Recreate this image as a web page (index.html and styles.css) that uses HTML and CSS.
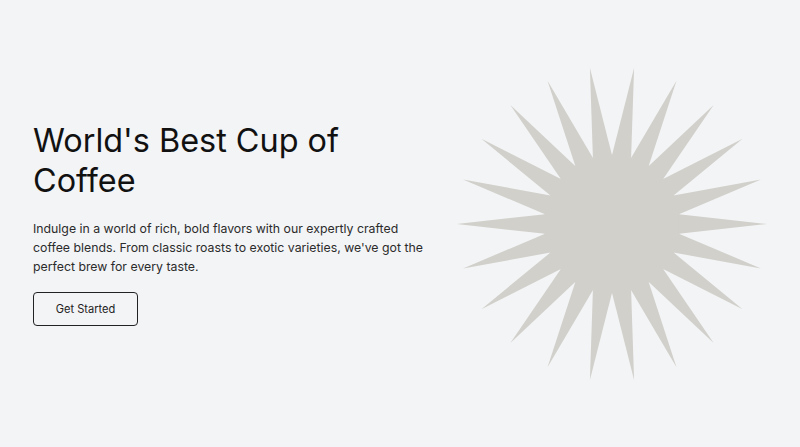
FILE: index.html
```html
<!DOCTYPE html>
<html lang="en">
<head>
<meta charset="utf-8">
<title>World's Best Cup of Coffee</title>
<link rel="stylesheet" href="styles.css">
</head>
<body>
<main class="hero">
  <section class="hero-text">
    <h1 class="title">World's Best Cup of Coffee</h1>
    <p class="lead">Indulge in a world of rich, bold flavors with our expertly crafted coffee blends. From classic roasts to exotic varieties, we've got the perfect brew for every taste.</p>
    <a class="btn" href="#">Get Started</a>
  </section>
  <section class="hero-art">
    <svg class="star" width="320" height="320" viewBox="-160 -160 320 320" aria-hidden="true">
      <defs>
        <polygon id="spike" points="0,-156 9.7,-67.3 -9.7,-67.3"/>
      </defs>
      <g fill="#d1d0cb" transform="scale(0.995,1.01)">
        <circle r="68.5"/>
        <use href="#spike" transform="rotate(8.1818)"/>
        <use href="#spike" transform="rotate(24.5455)"/>
        <use href="#spike" transform="rotate(40.9091)"/>
        <use href="#spike" transform="rotate(57.2727)"/>
        <use href="#spike" transform="rotate(73.6364)"/>
        <use href="#spike" transform="rotate(90)"/>
        <use href="#spike" transform="rotate(106.3636)"/>
        <use href="#spike" transform="rotate(122.7273)"/>
        <use href="#spike" transform="rotate(139.0909)"/>
        <use href="#spike" transform="rotate(155.4545)"/>
        <use href="#spike" transform="rotate(171.8182)"/>
        <use href="#spike" transform="rotate(188.1818)"/>
        <use href="#spike" transform="rotate(204.5455)"/>
        <use href="#spike" transform="rotate(220.9091)"/>
        <use href="#spike" transform="rotate(237.2727)"/>
        <use href="#spike" transform="rotate(253.6364)"/>
        <use href="#spike" transform="rotate(270)"/>
        <use href="#spike" transform="rotate(286.3636)"/>
        <use href="#spike" transform="rotate(302.7273)"/>
        <use href="#spike" transform="rotate(319.0909)"/>
        <use href="#spike" transform="rotate(335.4545)"/>
        <use href="#spike" transform="rotate(351.8182)"/>
      </g>
    </svg>
  </section>
</main>
</body>
</html>
```
FILE: styles.css
```css
html, body {
  margin: 0;
  padding: 0;
}
body {
  background: #f3f4f6;
  font-family: Inter, "Noto Sans", "Liberation Sans", sans-serif;
  color: #111827;
}
.hero {
  display: flex;
  align-items: center;
  height: 447px;
  padding-left: 33px;
  box-sizing: border-box;
}
.hero-text {
  width: 400px;
  flex: none;
  display: flex;
  flex-direction: column;
  align-items: flex-start;
}
.title {
  margin: 0;
  font-size: 32.4px;
  line-height: 40px;
  font-weight: 400;
  color: #111111;
}
.lead {
  margin: 17.5px 0 0;
  font-size: 12.3px;
  line-height: 19.3px;
  color: #2b2b2b;
}
.btn {
  margin-top: 15px;
  display: inline-flex;
  align-items: center;
  justify-content: center;
  width: 105px;
  height: 34px;
  box-sizing: border-box;
  border: 1px solid #222222;
  border-radius: 4px;
  font-size: 11.1px;
  color: #222222;
  text-decoration: none;
}
.hero-art {
  flex: 1;
  display: flex;
  justify-content: center;
  align-items: center;
  padding-right: 9px;
}
.star {
  display: block;
}
```
